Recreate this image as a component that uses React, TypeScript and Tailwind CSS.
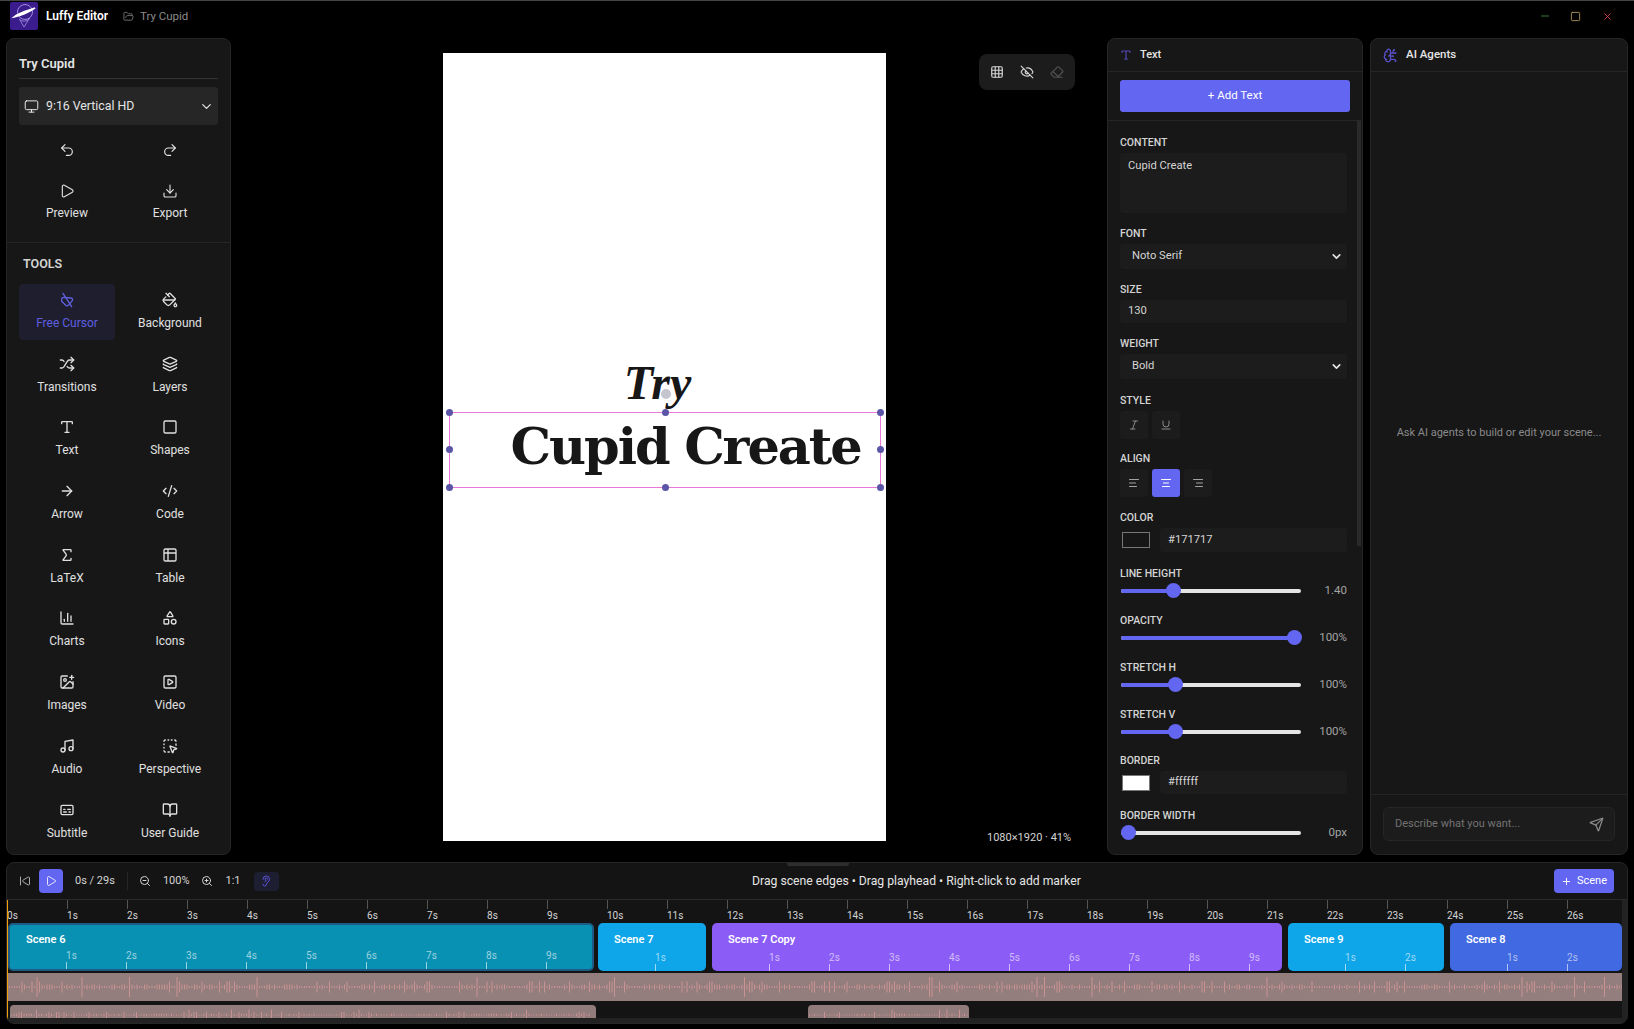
import React from "react";
import {
  Undo2, Redo2, Play, Download, Monitor, ChevronDown, FolderOpen, SkipBack, ZoomIn, ZoomOut, Ear, Plus, Send, Grid3x3, EyeOff, Eraser,
  Italic, Underline, AlignLeft, AlignCenter, AlignRight, Minus, Square, X, PaintBucket, Shuffle, Layers, Type, ArrowRight, CodeXml, Sigma,
  Table2, ChartColumn, Shapes, ImagePlus, SquarePlay, Music, SquareDashedMousePointer, Captions, BookOpen, BrainCircuit,
} from "lucide-react";

const FONT = "font-['Roboto','Noto_Sans',sans-serif]";

function MouseOff({ className }: { className?: string }) {
  return (
    <svg viewBox="0 0 24 24" fill="none" stroke="currentColor" strokeWidth="2" strokeLinecap="round" strokeLinejoin="round" className={className}>
      <path d="M4 11C4 9 5 8 7 8L18 9C20 9 21 11 20 13L14 20C13 21 11 21 10 20L4 14Z" />
      <path d="M6 2 19 22" />
    </svg>
  );
}

function Logo() {
  return (
    <svg viewBox="0 0 28 28" className="w-[28px] h-[28px] rounded-[2px]">
      <rect width="28" height="28" fill="#3a1c8c" />
      <circle cx="15" cy="10" r="7.5" fill="none" stroke="#b9a6f0" strokeWidth="0.8" />
      <path d="M4 15 C 10 14, 20 10, 25 6 C 20 8, 10 10, 4 15 Z" fill="#fff" stroke="#fff" strokeWidth="1.6" />
      <path d="M10 18 L14 25 L19 17" fill="none" stroke="#a894e6" strokeWidth="0.8" />
      <path d="M9 17 C 12 20, 17 20, 20 16" fill="none" stroke="#a894e6" strokeWidth="0.8" />
    </svg>
  );
}

const tools: [React.ComponentType<{ className?: string }>, string][] = [
  [MouseOff, "Free Cursor"], [PaintBucket, "Background"],
  [Shuffle, "Transitions"], [Layers, "Layers"],
  [Type, "Text"], [Square, "Shapes"],
  [ArrowRight, "Arrow"], [CodeXml, "Code"],
  [Sigma, "LaTeX"], [Table2, "Table"],
  [ChartColumn, "Charts"], [Shapes, "Icons"],
  [ImagePlus, "Images"], [SquarePlay, "Video"],
  [Music, "Audio"], [SquareDashedMousePointer, "Perspective"],
  [Captions, "Subtitle"], [BookOpen, "User Guide"],
];

function LeftPanel() {
  return (
    <aside className="w-[225px] h-full bg-[#171717] border border-[#262626] rounded-[8px] flex flex-col shrink-0">
      <div className="px-[12px] pt-[15px]">
        <div className="text-[13px] leading-[20px] font-semibold text-[#e5e5e5] pb-[4px] border-b border-[#333]">Try Cupid</div>
        <div className="mt-[8px] h-[38px] bg-[#262626] rounded-[3px] flex items-center pl-[5px] text-[#e5e5e5]">
          <Monitor className="w-[15px] h-[15px] text-[#e5e5e5]" strokeWidth={1.6} />
          <span className="ml-[7px] text-[12.3px]">9:16 Vertical HD</span>
          <ChevronDown className="w-[15px] h-[15px] ml-auto mr-[4px] text-[#e5e5e5]" />
        </div>
        <div className="mt-[17px] grid grid-cols-2 gap-x-[7px]">
          <Undo2 className="w-[16px] h-[16px] justify-self-center text-[#e5e5e5]" strokeWidth={1.7} />
          <Redo2 className="w-[16px] h-[16px] justify-self-center text-[#e5e5e5]" strokeWidth={1.7} />
        </div>
        <div className="mt-[25px] grid grid-cols-2 gap-x-[7px]">
          {[[Play, "Preview"], [Download, "Export"]].map(([I, l]: any) => (
            <div key={l} className="flex flex-col items-center text-[#e0e0e0]">
              <I className="w-[16px] h-[16px]" strokeWidth={1.7} />
              <span className="text-[12px] leading-[18px] mt-[5px]">{l}</span>
            </div>
          ))}
        </div>
      </div>
      <div className="mt-[20px] border-t border-[#262626] px-[12px] pt-[12px]">
        <div className="pl-[4px] text-[12.5px] leading-[18px] font-semibold text-[#d4d4d4]">TOOLS</div>
        <div className="mt-[11px] grid grid-cols-2 gap-x-[7px] gap-y-[7.7px]">
          {tools.map(([I, l], i) => (
            <div key={l} className={`h-[56px] flex flex-col items-center justify-center rounded-[4px] ${i === 0 ? "bg-[#1e1e2e] text-[#5f5fe0]" : "text-[#e0e0e0]"}`}>
              <I className="w-[16px] h-[16px]" />
              <span className="text-[12px] leading-[18px] mt-[6px]">{l}</span>
            </div>
          ))}
        </div>
      </div>
    </aside>
  );
}

function Label({ children }: { children: React.ReactNode }) {
  return <div className="text-[10.5px] leading-[14px] font-medium text-[#d4d4d4] mb-[3px]">{children}</div>;
}

function Field({ children, className = "" }: { children: React.ReactNode; className?: string }) {
  return <div className={`bg-[#1c1c1c] rounded-[3px] flex items-center text-[11.2px] text-[#d4d4d4] ${className}`}>{children}</div>;
}

function Track({ pos, value }: { pos: number; value: string }) {
  return (
    <div className="flex items-center h-[14px] mt-[1px]">
      <div className="relative w-[180px] h-[4px] bg-[#e5e5e5] rounded-full ml-[1px]">
        <div className="h-full bg-[#6366f1] rounded-full" style={{ width: pos }} />
        <div className="absolute top-[-6px] w-[15px] h-[15px] rounded-full bg-[#6366f1]" style={{ left: Math.max(pos - 7, 0) }} />
      </div>
      <span className="ml-auto text-[11.5px] text-[#a3a3a3]">{value}</span>
    </div>
  );
}

function Slider({ label, value, pos }: { label: string; value: string; pos: number }) {
  return (
    <div className="mt-[16px]">
      <Label>{label}</Label>
      <Track pos={pos} value={value} />
    </div>
  );
}

function TextPanel() {
  return (
    <aside className="w-[256px] h-full bg-[#171717] border border-[#262626] rounded-[8px] flex flex-col shrink-0 overflow-hidden">
      <div className="h-[33px] flex items-center px-[12px] border-b border-[#262626] shrink-0">
        <Type className="w-[12px] h-[12px] text-[#4f46b0]" strokeWidth={2.4} />
        <span className="ml-[8px] text-[11px] font-medium text-[#e5e5e5]">Text</span>
      </div>
      <div className="h-[49px] px-[12px] pt-[8px] border-b border-[#262626] shrink-0">
        <div className="h-[32px] rounded-[3px] bg-[#6366f1] text-white text-[11.5px] flex items-center justify-center">+ Add Text</div>
      </div>
      <div className="flex-1 flex min-h-0">
        <div className="flex-1 pl-[12px] pr-[10px] pt-[15px] min-w-0">
          <Label>CONTENT</Label>
          <Field className="h-[60px] items-start px-[8px] pt-[5px]">Cupid Create</Field>
          <div className="mt-[14px]"><Label>FONT</Label></div>
          <Field className="h-[25px] pl-[12px] pr-[4px]">Noto Serif<ChevronDown className="w-[13px] h-[13px] ml-auto text-[#e5e5e5]" strokeWidth={3} /></Field>
          <div className="mt-[14px]"><Label>SIZE</Label></div>
          <Field className="h-[23px] px-[8px]">130</Field>
          <div className="mt-[14px]"><Label>WEIGHT</Label></div>
          <Field className="h-[25px] pl-[12px] pr-[4px]">Bold<ChevronDown className="w-[13px] h-[13px] ml-auto text-[#e5e5e5]" strokeWidth={3} /></Field>
          <div className="mt-[15px]"><Label>STYLE</Label></div>
          <div className="flex gap-[4px]">
            <div className="w-[28px] h-[28px] bg-[#1c1c1c] rounded-[3px] flex items-center justify-center text-[#8a8a8a]"><Italic className="w-[12px] h-[12px]" /></div>
            <div className="w-[28px] h-[28px] bg-[#1c1c1c] rounded-[3px] flex items-center justify-center text-[#8a8a8a]"><Underline className="w-[12px] h-[12px]" /></div>
          </div>
          <div className="mt-[13px]"><Label>ALIGN</Label></div>
          <div className="flex gap-[4px]">
            <div className="w-[28px] h-[28px] bg-[#1c1c1c] rounded-[3px] flex items-center justify-center text-[#a3a3a3]"><AlignLeft className="w-[12px] h-[12px]" /></div>
            <div className="w-[28px] h-[28px] bg-[#6366f1] rounded-[3px] flex items-center justify-center text-white"><AlignCenter className="w-[12px] h-[12px]" /></div>
            <div className="w-[28px] h-[28px] bg-[#1c1c1c] rounded-[3px] flex items-center justify-center text-[#a3a3a3]"><AlignRight className="w-[12px] h-[12px]" /></div>
          </div>
          <div className="mt-[14px]"><Label>COLOR</Label></div>
          <div className="flex items-center">
            <div className="w-[28px] h-[16px] ml-[2px] bg-[#171717] border border-[#777]" />
            <Field className="ml-[10px] flex-1 h-[24px] px-[8px]">#171717</Field>
          </div>
          <div className="mt-[15px]"><Label>LINE HEIGHT</Label></div>
          <Track pos={52} value="1.40" />
          <Slider label="OPACITY" value="100%" pos={173} />
          <Slider label="STRETCH H" value="100%" pos={54} />
          <Slider label="STRETCH V" value="100%" pos={54} />
          <div className="mt-[15px]"><Label>BORDER</Label></div>
          <div className="flex items-center">
            <div className="w-[28px] h-[16px] ml-[2px] bg-white border border-[#777]" />
            <Field className="ml-[10px] flex-1 h-[23px] px-[8px]">#ffffff</Field>
          </div>
          <div className="mt-[15px]"><Label>BORDER WIDTH</Label></div>
          <Track pos={0} value="0px" />
        </div>
        <div className="w-[4px] h-[425px] bg-[#2a2a2a] mr-[1px] shrink-0" />
      </div>
    </aside>
  );
}

function AiPanel() {
  return (
    <aside className="flex-1 h-full bg-[#171717] border border-[#262626] rounded-[8px] flex flex-col min-w-0">
      <div className="h-[33px] flex items-center px-[12px] border-b border-[#262626] shrink-0">
        <BrainCircuit className="w-[15px] h-[15px] text-[#5b50c8]" />
        <span className="ml-[8px] text-[11.5px] font-medium text-[#e5e5e5]">AI Agents</span>
      </div>
      <div className="flex-1 flex items-center justify-center text-[11px] text-[#8a8a8a]">Ask AI agents to build or edit your scene...</div>
      <div className="h-[60px] border-t border-[#262626] px-[12px] pt-[12px] shrink-0">
        <div className="h-[34px] bg-[#1c1c1c] border border-[#262626] rounded-[6px] flex items-center pl-[11px] pr-[10px] text-[11px] text-[#737373]">
          Describe what you want...
          <Send className="ml-auto w-[15px] h-[15px] text-[#8a8a8a]" />
        </div>
      </div>
    </aside>
  );
}

function CanvasArea() {
  return (
    <div className="flex-1 h-full flex relative min-w-0">
      <div className="ml-[212px] mt-[15px] w-[443px] h-[788px] bg-white flex flex-col items-center shrink-0">
        <div className="mt-[306px] h-[47px] flex items-center text-[#171717] italic font-bold text-[48px] leading-none font-['Liberation_Serif',serif] -translate-x-[7px]">Try</div>
        <div className="relative mt-[6px] w-[432px] h-[76px] border border-[#e879d9] flex items-center justify-end pr-[19px] pb-[8px] shrink-0">
          <span className="text-[#171717] font-bold text-[51px] leading-none font-['DejaVu_Serif',serif] tracking-[-2.1px] whitespace-nowrap">Cupid Create</span>
          {["left-[-4px] top-[-4px]", "left-[212px] top-[-4px]", "right-[-4px] top-[-4px]", "left-[-4px] top-[33px]", "right-[-4px] top-[33px]", "left-[-4px] bottom-[-4px]", "left-[212px] bottom-[-4px]", "right-[-4px] bottom-[-4px]"].map((c) => (
            <i key={c} className={`absolute w-[7px] h-[7px] rounded-full bg-[#5b55a8] ${c}`} />
          ))}
          <i className="absolute left-[211px] top-[-24px] w-[10px] h-[10px] rounded-full bg-[#c5c5d0]" />
        </div>
      </div>
      <div className="absolute left-[748px] top-[16px] w-[96px] h-[36px] bg-[#1c1c1c] rounded-[8px] flex items-center justify-center gap-[16px]">
        <Grid3x3 className="w-[14px] h-[14px] text-[#d4d4d4]" />
        <EyeOff className="w-[14px] h-[14px] text-[#d4d4d4]" />
        <Eraser className="w-[14px] h-[14px] text-[#525252]" />
      </div>
      <div className="absolute left-[756px] top-[792px] text-[11px] leading-[16px] text-[#d4d4d4] whitespace-nowrap">1080×1920 · 41%</div>
    </div>
  );
}

function rng(seed: number) {
  let s = seed;
  return () => {
    s = (s * 16807) % 2147483647;
    return s / 2147483647;
  };
}

function Wave({ width, height, seed, step = 2.5 }: { width: number; height: number; seed: number; step?: number }) {
  const r = rng(seed);
  const bars: React.ReactNode[] = [];
  for (let x = 1; x < width; x += step) {
    const v = r();
    const h = v > 0.985 ? height * 0.9 : v > 0.85 ? height * 0.5 : v > 0.55 ? height * 0.22 : height * 0.09;
    bars.push(<rect key={x} x={x} y={(height - h) / 2} width={1} height={h} fill="#c99393" />);
  }
  return <svg width={width} height={height} className="block">{bars}</svg>;
}

function SceneBlock({ name, w, secs, color, selected, mr = "mr-[6px]" }: any) {
  return (
    <div className={`${w} ${mr} h-[48px] shrink-0 rounded-[5px] ${color} ${selected ? "border-[2px] border-[#1d5d85]" : ""} flex flex-col overflow-hidden`}>
      <div className={`text-[11px] leading-[16px] font-semibold text-white pl-[16px] ${selected ? "pt-[7px]" : "pt-[9px]"}`}>{name}</div>
      <div className={`flex mt-auto h-[20px] ${selected ? "ml-[56px]" : "ml-[57px]"}`}>
        {Array.from({ length: secs }).map((_, i) => (
          <div key={i} className="w-[60px] shrink-0 flex flex-col items-start">
            <span className="text-[10px] leading-[13px] text-white/60">{i + 1}s</span>
            <i className="w-[1px] h-[7px] bg-white/60" />
          </div>
        ))}
      </div>
    </div>
  );
}

function Timeline() {
  return (
    <section className="relative h-[162px] mx-[6px] bg-[#141414] border border-[#262626] rounded-[8px] overflow-hidden flex flex-col shrink-0">
      <i className="absolute left-[780px] top-0 w-[62px] h-[3px] bg-[#2e2e2e] rounded-b-[2px]" />
      <div className="h-[37px] flex items-center border-b border-[#2a2a2a] shrink-0 text-[#d4d4d4] relative">
        <SkipBack className="ml-[12px] w-[12px] h-[12px]" strokeWidth={1.6} />
        <div className="ml-[8px] w-[24px] h-[24px] rounded-[4px] bg-[#6366f1] flex items-center justify-center"><Play className="w-[12px] h-[12px] text-white" strokeWidth={1.6} /></div>
        <span className="ml-[12px] text-[11px] whitespace-nowrap">0s / 29s</span>
        <i className="ml-[12px] w-[1px] h-[18px] bg-[#262626]" />
        <ZoomOut className="ml-[11px] w-[12px] h-[12px]" />
        <span className="ml-[12px] text-[11px]">100%</span>
        <ZoomIn className="ml-[11px] w-[12px] h-[12px]" />
        <span className="ml-[13px] text-[11px]">1:1</span>
        <div className="ml-[13px] w-[25px] h-[19px] rounded-[4px] bg-[#1e1e33] flex items-center justify-center"><Ear className="w-[12px] h-[12px] text-[#5b55d8]" /></div>
        <span className="absolute left-[745px] text-[12.2px] text-[#e5e5e5] whitespace-nowrap">Drag scene edges • Drag playhead • Right-click to add marker</span>
        <div className="ml-auto mr-[13px] w-[60px] h-[24px] rounded-[4px] bg-[#6366f1] flex items-center justify-center gap-[5px] text-white text-[11px]"><Plus className="w-[11px] h-[11px] shrink-0" />Scene</div>
      </div>
      <div className="flex-1 relative overflow-hidden pr-[5px] min-h-0">
        <div className="h-[23px] flex overflow-hidden">
          {Array.from({ length: 27 }).map((_, i) => (
            <div key={i} className="w-[60px] shrink-0 flex flex-col items-start">
              <i className="w-[1px] h-[9px] bg-[#555]" />
              <span className="text-[10px] leading-[13px] text-[#d4d4d4]">{i}s</span>
            </div>
          ))}
        </div>
        <div className="flex pl-[1px]">
          <SceneBlock name="Scene 6" w="w-[586px]" mr="mr-[4px]" secs={9} color="bg-[#0891b2]" selected />
          <SceneBlock name="Scene 7" w="w-[108px]" secs={1} color="bg-[#0ea5e9]" />
          <SceneBlock name="Scene 7 Copy" w="w-[570px]" secs={9} color="bg-[#8b5cf6]" />
          <SceneBlock name="Scene 9" w="w-[156px]" secs={2} color="bg-[#0ea5e9]" />
          <SceneBlock name="Scene 8" w="w-[172px]" mr="mr-0" secs={2} color="bg-[#4169e1]" />
        </div>
        <div className="mt-[2px] ml-[1px] h-[28px] bg-[#947d7d] flex items-center overflow-hidden"><Wave width={1615} height={22} seed={77} /></div>
        <div className="mt-[4px] flex h-[14px] overflow-hidden">
          <div className="ml-[3px] w-[586px] h-[20px] bg-[#917b7b] rounded-t-[4px] pt-[4px]"><Wave width={580} height={12} seed={13} /></div>
          <div className="ml-[212px] w-[161px] h-[20px] bg-[#917b7b] rounded-t-[4px] pt-[4px]"><Wave width={160} height={12} seed={42} /></div>
        </div>
        <i className="absolute left-0 top-0 bottom-0 w-[1px] bg-[#f59e0b]" />
        <i className="absolute left-0 right-0 bottom-0 h-[5px] bg-[#222]" />
        <i className="absolute right-0 top-0 bottom-0 w-[5px] bg-[#222]" />
      </div>
    </section>
  );
}

export default function App() {
  return (
    <div className={`${FONT} w-[1634px] h-[1029px] bg-black flex flex-col overflow-hidden border-t border-[#444]`}>
      <header className="h-[37px] flex items-start shrink-0 relative">
        <div className="ml-[10px] mt-[1px]"><Logo /></div>
        <span className="ml-[8px] mt-[6px] text-[12px] leading-[18px] font-semibold text-white">Luffy Editor</span>
        <FolderOpen className="ml-[15px] mt-[10px] w-[11px] h-[11px] text-[#737373]" />
        <span className="ml-[6px] mt-[6px] text-[11.5px] leading-[18px] text-[#8a8a8a]">Try Cupid</span>
        <div className="ml-auto mr-[21px] mt-[9px] flex items-center gap-[19px]">
          <Minus className="w-[12px] h-[12px] text-[#3f7a3f]" strokeWidth={2} />
          <Square className="w-[11px] h-[11px] text-[#c0a060]" strokeWidth={1.8} />
          <X className="w-[11px] h-[11px] ml-[2px] text-[#d04040]" strokeWidth={2} />
        </div>
      </header>
      <main className="h-[817px] flex px-[6px] shrink-0">
        <LeftPanel />
        <CanvasArea />
        <TextPanel />
        <div className="w-[7px] shrink-0" />
        <div className="w-[258px] h-full shrink-0 flex"><AiPanel /></div>
      </main>
      <div className="h-[7px] shrink-0" />
      <Timeline />
    </div>
  );
}
